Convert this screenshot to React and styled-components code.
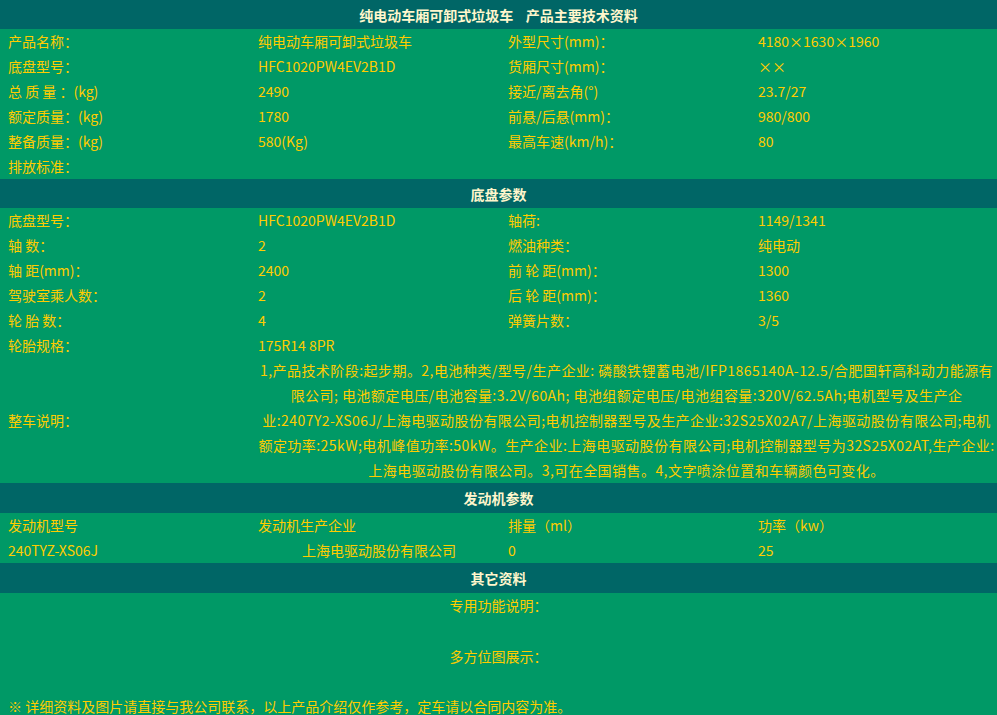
import React from "react";
import styled, { createGlobalStyle } from "styled-components";

const Global = createGlobalStyle`
  html, body { margin: 0; padding: 0; background: #fff; }
  body { font-family: "Noto Sans CJK SC", "Noto Sans", sans-serif; font-size: 14px; }
`;

const Table = styled.div`
  width: 997px;
  background: #009966;
  color: #ffcc00;
`;
const Head = styled.div`
  height: ${(p) => p.$h || 30}px;
  background: #006666;
  color: #fff6cc;
  font-weight: bold;
  font-size: 14px;
  display: flex;
  align-items: center;
  justify-content: center;
  white-space: pre;
`;
const Row = styled.div`
  display: grid;
  grid-template-columns: 250px 250px 250px 247px;
  min-height: 25px;
`;
const Cell = styled.div`
  padding-left: 8px;
  line-height: 25px;
  text-align: ${(p) => (p.$center ? "center" : "left")};
  display: ${(p) => (p.$mid ? "flex" : "block")};
  align-items: center;
  white-space: nowrap;
`;
const Desc = styled.div`
  grid-column: span 3;
  text-align: center;
  line-height: 25px;
  letter-spacing: 0.45px;
  padding-left: 6px;
`;
const Block = styled.div`
  text-align: ${(p) => p.$align || "center"};
  line-height: 25px;
  padding-left: ${(p) => (p.$align ? "8px" : 0)};
  padding-top: ${(p) => p.$pt || 0}px;
`;

const r = (a, b, c, d) => (
  <Row>
    <Cell>{a}</Cell><Cell>{b}</Cell><Cell>{c}</Cell><Cell>{d}</Cell>
  </Row>
);

export default function App() {
  return (
    <>
      <Global />
      <Table>
        <Head $h={29}>{"纯电动车厢可卸式垃圾车    产品主要技术资料"}</Head>
        {r("产品名称：", "纯电动车厢可卸式垃圾车", "外型尺寸(mm)：", "4180×1630×1960")}
        {r("底盘型号：", "HFC1020PW4EV2B1D", "货厢尺寸(mm)：", "××")}
        {r("总 质 量 ：(kg)", "2490", "接近/离去角(°)", "23.7/27")}
        {r("额定质量：(kg)", "1780", "前悬/后悬(mm)：", "980/800")}
        {r("整备质量：(kg)", "580(Kg)", "最高车速(km/h)：", "80")}
        {r("排放标准：", "", "", "")}
        <Head $h={29}>底盘参数</Head>
        {r("底盘型号：", "HFC1020PW4EV2B1D", "轴荷:", "1149/1341")}
        {r("轴 数：", "2", "燃油种类：", "纯电动")}
        {r("轴 距(mm)：", "2400", "前 轮 距(mm)：", "1300")}
        {r("驾驶室乘人数：", "2", "后 轮 距(mm)：", "1360")}
        {r("轮 胎 数：", "4", "弹簧片数：", "3/5")}
        {r("轮胎规格：", "175R14 8PR", "", "")}
        <Row>
          <Cell $mid>整车说明：</Cell>
          <Desc>
            1,产品技术阶段:起步期。2,电池种类/型号/生产企业: 磷酸铁锂蓄电池/IFP1865140A-12.5/合肥国轩高科动力能源有限公司; 电池额定电压/电池容量:3.2V/60Ah; 电池组额定电压/电池组容量:320V/62.5Ah;电机型号及生产企业:2407Y2-XS06J/上海电驱动股份有限公司;电机控制器型号及生产企业:32S25X02A7/上海驱动股份有限公司;电机额定功率:25kW;电机峰值功率:50kW。生产企业:上海电驱动股份有限公司;电机控制器型号为32S25X02AT,生产企业:上海电驱动股份有限公司。3,可在全国销售。4,文字喷涂位置和车辆颜色可变化。
          </Desc>
        </Row>
        <Head>发动机参数</Head>
        {r("发动机型号", "发动机生产企业", "排量（ml）", "功率（kw）")}
        <Row>
          <Cell>240TYZ-XS06J</Cell>
          <Cell $center>上海电驱动股份有限公司</Cell>
          <Cell>0</Cell>
          <Cell>25</Cell>
        </Row>
        <Head>其它资料</Head>
        <Block>专用功能说明：</Block>
        <Block $pt={26}>多方位图展示：</Block>
        <Block $align="left" $pt={25}>※ 详细资料及图片请直接与我公司联系，以上产品介绍仅作参考，定车请以合同内容为准。</Block>
      </Table>
    </>
  );
}
